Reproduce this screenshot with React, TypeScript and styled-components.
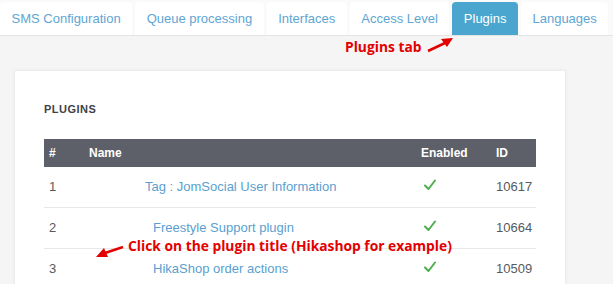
import React from "react";
import styled, { createGlobalStyle } from "styled-components";

const Global = createGlobalStyle`
  html, body { margin: 0; padding: 0; }
  body {
    background: #f5f5f5;
    font-family: "Liberation Sans", Arial, sans-serif;
    overflow: hidden;
  }
`;

const Page = styled.div`
  position: relative;
  width: 613px;
  height: 284px;
  overflow: hidden;
`;

const TabBar = styled.nav`
  display: flex;
  align-items: flex-end;
  height: 35px;
  background: #fafafa;
  border-bottom: 1px solid #e4e4e4;
`;

const Tab = styled.div<{ $active?: boolean }>`
  height: 33px;
  line-height: 33px;
  padding: 0 11.5px;
  margin-right: 3px;
  font-size: 13px;
  color: ${(p) => (p.$active ? "#ffffff" : "#5ea6d3")};
  background: ${(p) => (p.$active ? "#4aa6cf" : "#ffffff")};
  border-radius: 4px 4px 0 0;
  white-space: nowrap;
`;

const Main = styled.main`
  padding: 34px 0 0 14px;
`;

const Card = styled.section`
  width: 492px;
  min-height: 260px;
  background: #ffffff;
  border: 1px solid #ececec;
  box-shadow: 0 0 3px rgba(0, 0, 0, 0.05);
  padding: 30px 29px;
`;

const Heading = styled.h3`
  margin: 2px 0 23px;
  font-size: 11px;
  line-height: 13px;
  font-weight: bold;
  letter-spacing: 0.5px;
  color: #3f4248;
`;

const Grid = styled.div`
  display: grid;
  grid-template-columns: 40px 332px 75px 1fr;
`;

const HeadCell = styled.div`
  height: 28px;
  line-height: 28px;
  padding-left: 5px;
  background: #5d5f69;
  color: #ffffff;
  font-size: 12px;
  font-weight: bold;
`;

const Cell = styled.div<{ $indent?: number }>`
  height: 41px;
  display: flex;
  align-items: center;
  padding-left: ${(p) => p.$indent ?? 5}px;
  padding-bottom: 1px;
  box-sizing: border-box;
  border-bottom: 1px solid #e8e8e8;
  font-size: 13px;
  color: #555a60;
`;

const Link = styled.a`
  color: #5a9fd0;
  text-decoration: none;
`;

const Check = styled.svg`
  width: 12px;
  height: 12px;
  margin: -3px 0 0 3px;
`;

const Note = styled.div<{ $x: number; $y: number }>`
  position: absolute;
  left: ${(p) => p.$x}px;
  top: ${(p) => p.$y}px;
  font-family: "Open Sans", "DejaVu Sans", sans-serif;
  font-weight: 700;
  font-size: 13.8px;
  line-height: 16px;
  color: #e30000;
  white-space: nowrap;
`;

const Arrow = styled.svg`
  position: absolute;
  left: 0;
  top: 0;
  width: 613px;
  height: 284px;
  pointer-events: none;
`;

const rows = [
  { n: "1", name: "Tag : JomSocial User Information", indent: 61, id: "10617" },
  { n: "2", name: "Freestyle Support plugin", indent: 69, id: "10664" },
  { n: "3", name: "HikaShop order actions", indent: 69, id: "10509" },
];

const tabs = ["SMS Configuration", "Queue processing", "Interfaces", "Access Level", "Plugins", "Languages"];

const CheckIcon = () => (
  <Check viewBox="0 0 12 12">
    <path d="M1 6.5 L4.5 10 L11 1.5" fill="none" stroke="#4fae50" strokeWidth="2" strokeLinecap="round" strokeLinejoin="round" />
  </Check>
);

export default function App() {
  return (
    <Page>
      <Global />
      <TabBar>
        {tabs.map((t) => (
          <Tab key={t} $active={t === "Plugins"}>
            {t}
          </Tab>
        ))}
      </TabBar>
      <Main>
        <Card>
          <Heading>PLUGINS</Heading>
          <Grid>
            <HeadCell>#</HeadCell>
            <HeadCell>Name</HeadCell>
            <HeadCell>Enabled</HeadCell>
            <HeadCell>ID</HeadCell>
            {rows.map((r) => (
              <React.Fragment key={r.n}>
                <Cell>{r.n}</Cell>
                <Cell $indent={r.indent}>
                  <Link href="#">{r.name}</Link>
                </Cell>
                <Cell>
                  <CheckIcon />
                </Cell>
                <Cell>{r.id}</Cell>
              </React.Fragment>
            ))}
          </Grid>
        </Card>
      </Main>
      <Note $x={345} $y={39}>Plugins tab</Note>
      <Note $x={128} $y={238}>Click on the plugin title (Hikashop for example)</Note>
      <Arrow viewBox="0 0 613 284">
        <path d="M428 51 L445 43" stroke="#e30000" strokeWidth="2.5" fill="none" />
        <path d="M453 38 L441 39 L447 47 Z" fill="#e30000" />
        <path d="M123 247 L105 253" stroke="#e30000" strokeWidth="2.5" fill="none" />
        <path d="M96 257 L104 248 L108 257 Z" fill="#e30000" />
      </Arrow>
    </Page>
  );
}
